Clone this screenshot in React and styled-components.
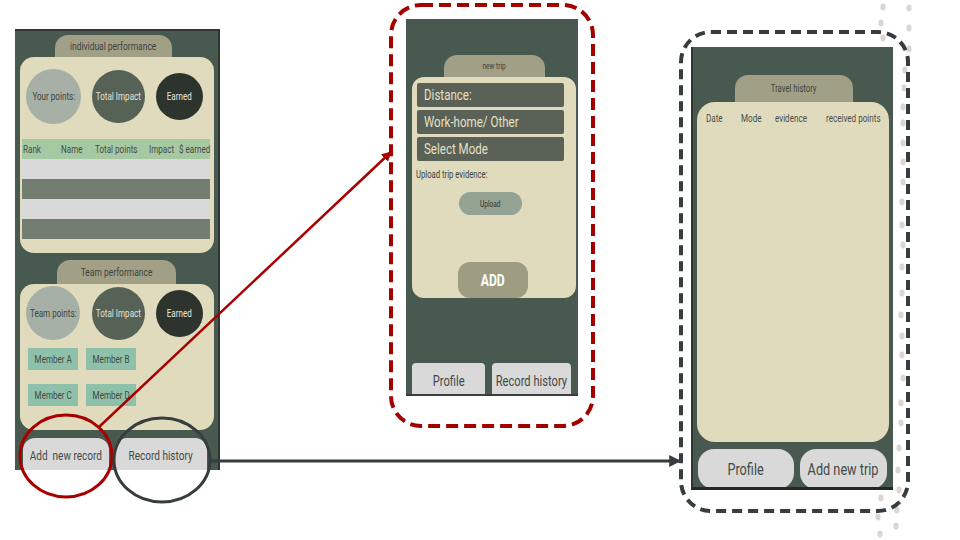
import React from "react";
import styled, { createGlobalStyle } from "styled-components";

const GlobalStyle = createGlobalStyle`
  html, body { margin: 0; padding: 0; background: #ffffff; }
  body {
    width: 960px; height: 540px; overflow: hidden;
    font-family: Roboto, "Liberation Sans", sans-serif;
  }
`;

const C = {
  phone: "#485a50",
  card: "#dfdbbc",
  tab: "#a19f85",
  gray: "#d9d9d9",
};

const Canvas = styled.div`
  position: relative;
  width: 960px;
  height: 540px;
  background: #fff;
`;

/* condensed label: the reference uses a narrow display face */
const Label = styled.span`
  display: inline-block;
  white-space: nowrap;
  transform: scaleX(${(p) => p.$sx || 0.77});
  transform-origin: ${(p) => p.$o || "center"} center;
`;

const Phone = styled.div`
  position: absolute;
  left: ${(p) => p.$x}px;
  top: ${(p) => p.$y}px;
  width: ${(p) => p.$w}px;
  height: ${(p) => p.$h}px;
  box-sizing: border-box;
  background: ${C.phone};
  display: flex;
  flex-direction: column;
  padding: ${(p) => p.$pad};
  border-top: ${(p) => p.$bt || "0"};
  border-right: ${(p) => p.$br || "0"};
  border-left: ${(p) => p.$bl || "0"};
  border-bottom: ${(p) => p.$bb || "0"};
  overflow: hidden;
`;

const SectionTab = styled.div`
  width: ${(p) => p.$w}px;
  height: ${(p) => p.$h}px;
  margin-left: ${(p) => p.$ml}px;
  margin-top: ${(p) => p.$mt || 0}px;
  background: ${C.tab};
  border-radius: 13px 13px 0 0;
  display: flex;
  align-items: center;
  justify-content: center;
  font-size: ${(p) => p.$fs || 11}px;
  color: #3d433e;
  flex-shrink: 0;
`;

const Card = styled.div`
  width: ${(p) => p.$w}px;
  height: ${(p) => p.$h}px;
  margin-left: ${(p) => p.$ml || 0}px;
  box-sizing: border-box;
  background: ${C.card};
  border-radius: ${(p) => p.$r || 14}px;
  display: flex;
  flex-direction: column;
  flex-shrink: 0;
`;

const CircleRow = styled.div`
  display: flex;
  align-items: center;
  justify-content: space-between;
  margin-top: ${(p) => p.$mt}px;
  padding: 0 11px 0 6px;
`;

const Circle = styled.div`
  width: ${(p) => p.$size}px;
  height: ${(p) => p.$size}px;
  border-radius: 50%;
  background: ${(p) => p.$bg};
  color: ${(p) => p.$fg};
  display: flex;
  align-items: center;
  justify-content: center;
  font-size: 10.5px;
  white-space: nowrap;
  flex-shrink: 0;
`;

const Table = styled.div`
  margin: 15px 4px 0 2px;
  display: flex;
  flex-direction: column;
`;

const TableRow = styled.div`
  height: 20px;
  background: ${(p) => p.$bg};
  display: flex;
  align-items: center;
  font-size: 10.5px;
  color: #464d46;
  white-space: nowrap;
`;

const Cell = styled.span`
  width: ${(p) => p.$w}px;
  padding-left: ${(p) => p.$pl || 0}px;
  flex-shrink: 0;
  white-space: nowrap;
`;

const MemberGrid = styled.div`
  display: grid;
  grid-template-columns: 50px 50px;
  column-gap: 8px;
  row-gap: 14px;
  margin: 8px 0 0 8px;
`;

const MemberChip = styled.div`
  height: 22px;
  background: #8fc1aa;
  color: #3f4a44;
  font-size: 10.5px;
  display: flex;
  align-items: center;
  justify-content: center;
  white-space: nowrap;
`;

const BottomBar = styled.div`
  display: flex;
  margin-top: ${(p) => (p.$auto ? "auto" : `${p.$mt}px`)};
  padding-left: ${(p) => p.$pl}px;
  gap: ${(p) => p.$gap}px;
  flex-shrink: 0;
`;

const NavButton = styled.div`
  width: ${(p) => p.$w}px;
  height: ${(p) => p.$h}px;
  background: ${C.gray};
  border-radius: ${(p) => p.$r};
  color: #454a47;
  font-size: ${(p) => p.$fs}px;
  display: flex;
  align-items: center;
  justify-content: center;
  white-space: nowrap;
  padding-top: ${(p) => p.$pt || 0}px;
  box-sizing: border-box;
`;

const Field = styled.div`
  width: 147px;
  height: 24px;
  margin-left: 5px;
  margin-top: ${(p) => p.$mt}px;
  box-sizing: border-box;
  padding-left: 7px;
  background: #5a6257;
  border-radius: 2px;
  color: #e4e0c6;
  font-size: 15px;
  display: flex;
  align-items: center;
  white-space: nowrap;
`;

const Hint = styled.div`
  margin: 8px 0 0 4px;
  font-size: 10px;
  line-height: 12px;
  color: #3e443f;
`;

const Pill = styled.div`
  width: ${(p) => p.$w}px;
  height: ${(p) => p.$h}px;
  margin-left: ${(p) => p.$ml}px;
  margin-top: ${(p) => (p.$auto ? "auto" : `${p.$mt}px`)};
  border-radius: ${(p) => p.$r}px;
  background: ${(p) => p.$bg};
  color: ${(p) => p.$fg};
  font-size: ${(p) => p.$fs}px;
  font-weight: ${(p) => p.$fw || 400};
  display: flex;
  align-items: center;
  justify-content: center;
`;

const HistoryHead = styled.div`
  display: flex;
  margin-top: 10px;
  padding-left: 9px;
  font-size: 10.5px;
  color: #4a4f4a;
  white-space: nowrap;
`;

const Overlay = styled.svg`
  position: absolute;
  left: 0;
  top: 0;
  width: 960px;
  height: 540px;
  pointer-events: none;
`;

const dots = [
  [883, 7], [909, 8], [881, 23], [909, 28], [883, 38], [909, 49],
  [905, 70], [904, 88], [903, 107], [903, 123], [903, 143], [903, 162],
  [903, 182], [902, 202], [902, 225], [903, 245], [902, 267], [902, 293],
  [901, 315], [902, 336], [902, 355], [903, 378], [901, 403], [901, 423],
  [899, 448], [898, 470], [899, 490], [881, 498], [897, 510], [878, 517],
  [896, 526], [880, 534],
];

function LeftPhone() {
  return (
    <Phone $x={15} $y={29} $w={205} $h={441} $pad="4px 0 0 5px" $bt="2px solid #2f3633" $br="2px solid #2f3633">
      <SectionTab $w={117} $h={22} $ml={35}><Label>individual performance</Label></SectionTab>
      <Card $w={194} $h={196}>
        <CircleRow $mt={12}>
          <Circle $size={55} $bg="#a7b0a6" $fg="#3d443e"><Label>Your points:</Label></Circle>
          <Circle $size={53} $bg="#576257" $fg="#e0e0d6"><Label>Total Impact</Label></Circle>
          <Circle $size={47} $bg="#2d342e" $fg="#e6e6e0"><Label>Earned</Label></Circle>
        </CircleRow>
        <Table>
          <TableRow $bg="#a6c8a3">
            <Cell $w={38} $pl={1}><Label $o="left">Rank</Label></Cell>
            <Cell $w={34}><Label $o="left">Name</Label></Cell>
            <Cell $w={54}><Label $o="left">Total points</Label></Cell>
            <Cell $w={30}><Label $o="left">Impact</Label></Cell>
            <Cell $w={32}><Label $o="left">$ earned</Label></Cell>
          </TableRow>
          <TableRow $bg="#d9d9d9" />
          <TableRow $bg="#737d70" />
          <TableRow $bg="#d9d9d9" />
          <TableRow $bg="#737d70" />
        </Table>
      </Card>
      <SectionTab $w={119} $h={24} $ml={37} $mt={7}><Label>Team performance</Label></SectionTab>
      <Card $w={194} $h={146}>
        <CircleRow $mt={2}>
          <Circle $size={54} $bg="#a7b0a6" $fg="#3d443e"><Label>Team points:</Label></Circle>
          <Circle $size={53} $bg="#576257" $fg="#e0e0d6"><Label>Total Impact</Label></Circle>
          <Circle $size={47} $bg="#2d342e" $fg="#e6e6e0"><Label>Earned</Label></Circle>
        </CircleRow>
        <MemberGrid>
          <MemberChip><Label>Member A</Label></MemberChip>
          <MemberChip><Label>Member B</Label></MemberChip>
          <MemberChip><Label>Member C</Label></MemberChip>
          <MemberChip><Label>Member D</Label></MemberChip>
        </MemberGrid>
      </Card>
      <BottomBar $mt={8} $pl={3} $gap={6}>
        <NavButton $w={86} $h={34} $r="12px 12px 0 0" $fs={13}><Label>Add&nbsp; new record</Label></NavButton>
        <NavButton $w={92} $h={34} $r="12px 12px 0 0" $fs={13}><Label>Record history</Label></NavButton>
      </BottomBar>
    </Phone>
  );
}

function MiddlePhone() {
  return (
    <Phone $x={406} $y={19} $w={172} $h={377} $pad="36px 0 0 6px" $bb="2px solid #3a3f3c">
      <SectionTab $w={101} $h={22} $ml={32} $fs={8.5}><Label>new trip</Label></SectionTab>
      <Card $w={164} $h={221} $r={12}>
        <Field $mt={6}><Label $o="left">Distance:</Label></Field>
        <Field $mt={3}><Label $o="left">Work-home/ Other</Label></Field>
        <Field $mt={3}><Label $o="left">Select Mode</Label></Field>
        <Hint><Label $o="left">Upload trip evidence:</Label></Hint>
        <Pill $w={63} $h={23} $ml={47} $mt={11} $r={12} $bg="#95a394" $fg="#2f3530" $fs={8.5}><Label>Upload</Label></Pill>
        <Pill $w={70} $h={36} $ml={46} $auto $r={12} $bg="#9e9d82" $fg="#ffffff" $fs={17} $fw={700}><Label $sx={0.72}>ADD</Label></Pill>
      </Card>
      <BottomBar $auto $pl={0} $gap={7}>
        <NavButton $w={73} $h={31} $r="4px 4px 0 0" $fs={14.5} $pt={6}><Label>Profile</Label></NavButton>
        <NavButton $w={79} $h={31} $r="4px 4px 0 0" $fs={14.5} $pt={6}><Label>Record history</Label></NavButton>
      </BottomBar>
    </Phone>
  );
}

function RightPhone() {
  return (
    <Phone $x={691} $y={47} $w={202} $h={443} $pad="28px 0 0 4px" $bl="2px solid #2f3633" $bb="3px solid #242826">
      <SectionTab $w={118} $h={27} $ml={38} $fs={10}><Label>Travel history</Label></SectionTab>
      <Card $w={192} $h={340} $r={18}>
        <HistoryHead>
          <Cell $w={35}><Label $o="left">Date</Label></Cell>
          <Cell $w={34}><Label $o="left">Mode</Label></Cell>
          <Cell $w={51}><Label $o="left">evidence</Label></Cell>
          <Cell $w={60}><Label $o="left">received points</Label></Cell>
        </HistoryHead>
      </Card>
      <BottomBar $mt={7} $pl={1} $gap={6}>
        <NavButton $w={96} $h={40} $r="16px" $fs={16.5}><Label>Profile</Label></NavButton>
        <NavButton $w={87} $h={40} $r="16px" $fs={16.5}><Label>Add new trip</Label></NavButton>
      </BottomBar>
    </Phone>
  );
}

export default function App() {
  return (
    <>
      <GlobalStyle />
      <Canvas>
        <LeftPhone />
        <MiddlePhone />
        <RightPhone />
        <Overlay viewBox="0 0 960 540">
          <defs>
            <marker id="arRed" viewBox="0 0 10 10" refX="9" refY="5" markerWidth="4" markerHeight="4" orient="auto">
              <path d="M0 0 L10 5 L0 10 z" fill="#a80000" />
            </marker>
            <marker id="arDark" viewBox="0 0 10 10" refX="9" refY="5" markerWidth="4" markerHeight="4" orient="auto">
              <path d="M0 0 L10 5 L0 10 z" fill="#363d3f" />
            </marker>
          </defs>
          {dots.map(([x, y], i) => (
            <ellipse key={i} cx={x} cy={y} rx={2.6} ry={3.4} fill="#dcd6d0" />
          ))}
          <rect x={391} y={5} width={202} height={421} rx={30} fill="none" stroke="#a50000" strokeWidth={4} strokeDasharray="12 6" />
          <rect x={681} y={32} width={227} height={479} rx={30} fill="none" stroke="#363d3f" strokeWidth={4} strokeDasharray="10 6" />
          <ellipse cx={66} cy={456} rx={46} ry={41} fill="none" stroke="#a80000" strokeWidth={3} />
          <ellipse cx={162} cy={460} rx={48} ry={42} fill="none" stroke="#363d3f" strokeWidth={3} />
          <line x1={99} y1={427} x2={391} y2={152} stroke="#a80000" strokeWidth={2.5} markerEnd="url(#arRed)" />
          <line x1={209} y1={461} x2={680} y2={461} stroke="#363d3f" strokeWidth={3} markerEnd="url(#arDark)" />
        </Overlay>
      </Canvas>
    </>
  );
}
